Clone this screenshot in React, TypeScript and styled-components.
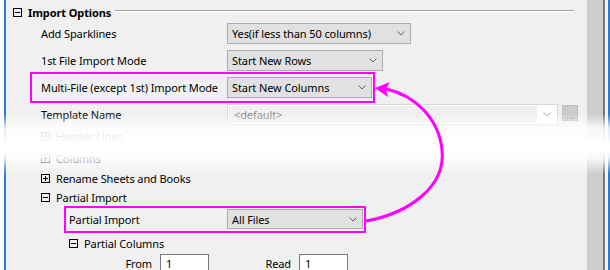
import React from "react";
import styled, { createGlobalStyle } from "styled-components";

const Global = createGlobalStyle`
  html, body {
    margin: 0;
    padding: 0;
    background: #f0f0f0;
  }
  body {
    font-family: "Noto Sans", "Open Sans", sans-serif;
    font-size: 11px;
    letter-spacing: -0.1px;
    color: #000;
  }
`;

const Frame = styled.div`
  position: relative;
  display: flex;
  width: 610px;
  height: 270px;
  overflow: hidden;
  background: #f0f0f0;
`;

const LeftEdge = styled.div`
  width: 4px;
  background: #ffffff;
  border-right: 2px solid #2a7ad5;
`;

const Content = styled.div`
  display: flex;
  flex-direction: column;
  width: 581px;
`;

const ScrollTrack = styled.div`
  width: 16px;
  background: #cdcdcd;
`;

const RightEdge = styled.div`
  width: 3px;
  background: #f4f4f4;
  border-left: 2px solid #7a7a7a;
  border-right: 2px solid #2a7ad5;
`;

const GroupHeader = styled.div`
  flex: none;
  display: flex;
  align-items: center;
  height: 20px;
  margin-top: 2px;
  padding-left: 7px;
  font-size: 11px;
  font-weight: 700;
`;

const GroupLine = styled.div`
  flex: 1;
  height: 1px;
  margin: 0 13px 0 4px;
  align-self: flex-start;
  margin-top: 8px;
  background: #a0a0a0;
  border-bottom: 1px solid #ffffff;
`;

const Toggle = styled.span<{ $open?: boolean }>`
  position: relative;
  display: inline-block;
  flex: none;
  width: 9px;
  height: 9px;
  margin-right: 6px;
  border: 1px solid #000;
  box-sizing: border-box;
  &::before {
    content: "";
    position: absolute;
    left: 1px;
    top: 3px;
    width: 5px;
    height: 1px;
    background: #000;
  }
  &::after {
    content: "";
    display: ${(p) => (p.$open ? "none" : "block")};
    position: absolute;
    left: 3px;
    top: 1px;
    width: 1px;
    height: 5px;
    background: #000;
  }
`;

const Row = styled.div<{ $h: number; $mt?: number }>`
  flex: none;
  position: relative;
  display: grid;
  grid-template-columns: 221px auto 1fr;
  align-items: center;
  height: ${(p) => p.$h}px;
  margin-top: ${(p) => p.$mt ?? 0}px;
`;

const Label = styled.div<{ $indent: number }>`
  padding-left: ${(p) => p.$indent}px;
  white-space: nowrap;
`;

const TreeItem = styled.div<{ $h: number; $mt?: number; $indent: number }>`
  flex: none;
  display: flex;
  align-items: center;
  height: ${(p) => p.$h}px;
  margin-top: ${(p) => p.$mt ?? 0}px;
  padding-left: ${(p) => p.$indent}px;
  white-space: nowrap;
`;

const Combo = styled.div<{ $w: number }>`
  display: flex;
  align-items: center;
  justify-content: space-between;
  width: ${(p) => p.$w}px;
  height: 100%;
  box-sizing: border-box;
  padding: 0 5px 0 4px;
  background: #e1e1e1;
  border: 1px solid #adadad;
  white-space: nowrap;
`;

const DisabledCombo = styled.div<{ $w: number }>`
  display: flex;
  width: ${(p) => p.$w}px;
  height: 100%;
  box-sizing: border-box;
  background: #ffffff;
  border: 1px solid #d9d9d9;
  padding: 1px 0 1px 1px;
`;

const DisabledEdit = styled.div`
  flex: 1;
  display: flex;
  align-items: center;
  padding-left: 5px;
  background: #f0f0f0;
  color: #8a8a8a;
`;

const DisabledArrow = styled.div`
  display: flex;
  align-items: center;
  justify-content: center;
  width: 20px;
`;

const EllipsisButton = styled.div`
  justify-self: start;
  align-self: start;
  display: flex;
  align-items: flex-end;
  justify-content: center;
  width: 16px;
  height: 16px;
  margin: 1px 0 0 4px;
  padding-bottom: 2px;
  box-sizing: border-box;
  background: #cccccc;
  border: 1px solid #bfbfbf;
  color: #8a8a8a;
  font-size: 11px;
  line-height: 6px;
  letter-spacing: 0;
`;

const FieldRow = styled.div`
  flex: none;
  display: flex;
  align-items: flex-start;
  height: 22px;
  margin-top: 1px;
`;

const FieldLabel = styled.div<{ $w: number }>`
  width: ${(p) => p.$w}px;
  text-align: right;
  padding-right: 8px;
  box-sizing: border-box;
  line-height: 19px;
`;

const Input = styled.div`
  width: 49px;
  height: 22px;
  box-sizing: border-box;
  padding-left: 5px;
  background: #ffffff;
  border: 1px solid #7a7a7a;
  line-height: 17px;
`;

const Highlight = styled.span<{ $l: number; $t: number; $w: number; $h: number }>`
  position: absolute;
  left: ${(p) => p.$l}px;
  top: ${(p) => p.$t}px;
  width: ${(p) => p.$w}px;
  height: ${(p) => p.$h}px;
  box-sizing: border-box;
  border: 2px solid #ff00ff;
  pointer-events: none;
`;

const Fade = styled.div`
  position: absolute;
  left: 0;
  top: 114px;
  width: 100%;
  height: 60px;
  background: linear-gradient(
    to bottom,
    rgba(255, 255, 255, 0) 0px,
    rgba(255, 255, 255, 0.85) 14px,
    rgba(255, 255, 255, 0.9) 21px,
    rgba(255, 255, 255, 1) 30px,
    rgba(255, 255, 255, 1) 36px,
    rgba(255, 255, 255, 0.87) 44px,
    rgba(255, 255, 255, 0) 60px
  );
  pointer-events: none;
`;

const ArrowLayer = styled.svg`
  position: absolute;
  left: 0;
  top: 0;
  pointer-events: none;
`;

const Chevron: React.FC<{ color?: string }> = ({ color = "#606060" }) => (
  <svg width="8" height="5" viewBox="0 0 8 5">
    <polyline points="0.5,0.5 4,4 7.5,0.5" fill="none" stroke={color} strokeWidth="1" />
  </svg>
);

export default function App() {
  return (
    <>
      <Global />
      <Frame>
        <LeftEdge />
        <Content>
          <GroupHeader>
            <Toggle $open />
            Import Options
            <GroupLine />
          </GroupHeader>

          <Row $h={21} $mt={1}>
            <Label $indent={35}>Add Sparklines</Label>
            <Combo $w={184}>
              Yes(if less than 50 columns)
              <Chevron />
            </Combo>
          </Row>

          <Row $h={21} $mt={6}>
            <Label $indent={35}>1st File Import Mode</Label>
            <Combo $w={156}>
              Start New Rows
              <Chevron />
            </Combo>
          </Row>

          <Row $h={21} $mt={6}>
            <Highlight $l={24} $t={-5} $w={345} $h={31} />
            <Label $indent={35}>Multi-File (except 1st) Import Mode</Label>
            <Combo $w={145}>
              Start New Columns
              <Chevron />
            </Combo>
          </Row>

          <Row $h={21} $mt={6}>
            <Label $indent={35}>Template Name</Label>
            <DisabledCombo $w={331}>
              <DisabledEdit>&lt;default&gt;</DisabledEdit>
              <DisabledArrow>
                <Chevron color="#a8a8a8" />
              </DisabledArrow>
            </DisabledCombo>
            <EllipsisButton>...</EllipsisButton>
          </Row>

          <TreeItem $h={22} $indent={35}>
            <Toggle />
            Header Lines
          </TreeItem>
          <TreeItem $h={22} $indent={35}>
            <Toggle />
            Columns
          </TreeItem>
          <TreeItem $h={19} $indent={35}>
            <Toggle />
            Rename Sheets and Books
          </TreeItem>
          <TreeItem $h={19} $indent={35}>
            <Toggle $open />
            Partial Import
          </TreeItem>

          <Row $h={20} $mt={2}>
            <Highlight $l={58} $t={-3} $w={302} $h={27} />
            <Label $indent={63}>Partial Import</Label>
            <Combo $w={136}>
              All Files
              <Chevron />
            </Combo>
          </Row>

          <TreeItem $h={19} $mt={5} $indent={63}>
            <Toggle $open />
            Partial Columns
          </TreeItem>

          <FieldRow>
            <FieldLabel $w={154}>From</FieldLabel>
            <Input>1</Input>
            <FieldLabel $w={90}>Read</FieldLabel>
            <Input>1</Input>
          </FieldRow>
        </Content>
        <ScrollTrack />
        <RightEdge />

        <Fade />
        <ArrowLayer width="610" height="270" viewBox="0 0 610 270">
          <path
            d="M366,221 C410,213 446,186 442,150 C439,118 414,95 386,89"
            fill="none"
            stroke="#ff00ff"
            strokeWidth="3"
          />
          <polygon points="375,88 390,82 386,89 388,97" fill="#ff00ff" />
        </ArrowLayer>
      </Frame>
    </>
  );
}
